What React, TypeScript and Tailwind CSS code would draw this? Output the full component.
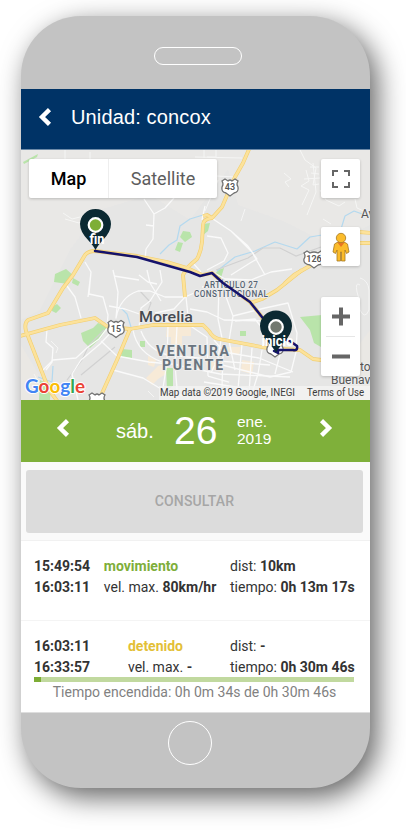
import React from "react";

const arial = "font-['Liberation_Sans',Arial,sans-serif]";
const roboto = "font-['Roboto','Liberation_Sans',sans-serif]";

const highways = [
  "M250 147L243 163L235 177L222 207L212 218Q203 219 203 225L202 242Q201 252 197 259Q191 264 187 268",
  "M212 218L207 215L203 216",
  "M95 251Q88 251 85 255L73 275L63 288L48 313L28 320Q24 323 26 331L40 367L49 390L58 402",
  "M20 336L60 325L95 318L108 327L130 329L153 325L203 325L209 331Q213 338 219 339L267 348L300 350L313 359L330 361",
  "M130 329L117 360L99 400",
  "M95 251L137 256L167 262L187 268L202 275L212 273L223 283L250 302L262 317L268 347",
  "M187 268L183 275L185 297",
  "M302 270L277 290L262 299L250 303",
  "M322 259L294 275L284 284",
  "M359 232L372 233",
  "M359 243L372 243",
];

const streets = [
  "M144 199L154 214L165 208L174 198M154 214L153 239L146 249L145 260M146 225L154 226",
  "M85 262L91 272L88 297M91 272L89 294L103 297L108 315L107 327",
  "M67 286L75 297L81 318",
  "M113 270L118 292L117 307L116 318Q120 297 138 291L150 291L165 297L185 297L201 290",
  "M109 306L125 309L151 318L186 324M160 270L162 282L150 301L141 308L139 328",
  "M147 270L150 283L161 301M157 284L148 282L139 275M139 280L114 276",
  "M185 297L174 309L155 313M186 297L189 325L207 337L208 376",
  "M108 327L99 339L88 347L76 358L53 360L42 371",
  "M116 327L100 344L81 360L72 374L78 400M101 341L117 356L149 362L180 365",
  "M133 330Q137 353 162 362L220 374L290 377M141 331Q148 350 168 355L208 359",
  "M113 370L143 378L161 389L188 397",
  "M168 326L167 362L163 388M177 326L175 365L178 400",
  "M47 329L46 342L53 348L52 362L46 370",
  "M211 271L225 279L251 280L271 272L292 269M228 291L243 293L258 315",
  "M210 217L231 231L252 252L265 275M231 231L248 246L257 259L250 263L231 275",
  "M207 236L221 238L228 253L224 261L207 270M205 206L202 220M193 263L201 272",
  "M202 287L219 286L218 319L222 338M190 309L207 312L224 320L267 321",
  "M225 294L233 316L229 341L235 370M235 321L255 319L269 337M233 316L265 308L288 303L297 333L296 350",
  "M214 340L224 352L259 358L293 372M221 340L218 358L211 373M242 344L238 389M252 348L249 393",
  "M262 350L258 374L250 400M281 350L275 374M297 348L291 372L270 377L214 363",
  "M205 360L270 365M204 382L248 389M223 353L222 387M208 376L229 382",
];

function Shield({ x, y, n }: { x: number; y: number; n: string }) {
  const w = n.length > 2 ? 10 : 8;
  return (
    <g transform={`translate(${x} ${y})`}>
      <path
        d={`M${-w} -6L${-w + 3} -8L${-w + 6} -6Q0 -8 ${w - 6} -6L${w - 3} -8L${w} -6Q${w - 2} -3 ${w} 0Q${w + 1} 5 4 6L0 9L-4 6Q${-w - 1} 5 ${-w} 0Q${-w + 2} -3 ${-w} -6Z`}
        fill="#fff"
        stroke="#727272"
        strokeWidth="1.3"
      />
      {n && <text y="3.2" textAnchor="middle" fontSize="9" fontWeight="600" fill="#555">{n}</text>}
    </g>
  );
}

function Pin({ x, y, r, color, label, width }: { x: number; y: number; r: number; color: string; label: string; width: number }) {
  const s = r / 15.5;
  return (
    <g transform={`translate(${x} ${y})`}>
      <path transform={`scale(${s})`} d="M0 25Q-2 21 -7 15.5Q-15.5 7 -15.5 -1A15.5 15 0 0 1 15.5 -1Q15.5 7 7 15.5Q2 21 0 25Z" fill="#0b2932" />
      <circle r="6.8" fill={color} stroke="#fff" strokeWidth="2.2" />
      <text x={1.5 - width / 2} y="18.5" fontSize="14" fontWeight="700" fill="#fff" textLength={width} lengthAdjust="spacingAndGlyphs">{label}</text>
    </g>
  );
}

function CityMap() {
  return (
    <svg viewBox="21 150 349 250" className={`block h-full w-full ${roboto}`}>
      <rect x="21" y="150" width="349" height="250" fill="#e6e6e5" />
      <path d="M21 150H370V225L330 245L285 222L238 205L228 170L190 220L150 195L100 210L70 250L40 310L21 320Z" fill="#e9e8e6" />
      <path d="M345 400L340 370L370 330V400ZM21 345L42 380L45 400H21Z" fill="#eae8e4" />
      <path d="M167 327h24v9h-9v10h-11v-9h-5zM148 356l8 4-2 7-6-2zM158 366l10-3 1 9-11 7-6 6-6-7zM205 357l17 3-1 12-14-4zM227 347h14l-2 8-14-4zM242 360l12 2-2 12-11-3zM266 326h14v13h-14z" fill="#f7ead7" />
      <g fill="#b9e4aa">
        <path d="M81 333L93 328L98 323L108 327L101 338L90 348L83 341ZM55 274L66 269L74 276L68 284L54 282ZM73 278L80 282L78 286L72 283ZM52 307L57 304L61 308L56 313L52 311ZM183 231L190 232L192 237L185 242L180 237ZM178 242L183 243L180 252L175 250Z" />
        <path d="M300 317L322 315L321 347L314 343L310 330ZM240 331h6v5h-6zM140 341h5v6h-5zM122 349l10 1v8l-11-1zM166 368h7v18l-6 4zM40 380L51 385L50 400H39ZM203 224L210 223L208 231L202 236ZM218 270L224 268L221 278L213 277ZM23 162L38 154L37 157L24 164Z" />
      </g>
      <path d="M160 254L169 245L177 240L180 226L190 219L203 215M217 271L235 257L255 251L275 242L297 249L310 237L322 235M341 229L345 216L354 211L370 217M120 307L127 314L131 327M53 366L52 382L38 377" fill="none" stroke="#b4d9ef" strokeWidth="1.2" strokeLinejoin="round" />
      <path d="M216 270L248 258L263 248L280 248L296 256L321 247M81 375L115 347M140 291L151 303L148 311M104 330L89 345L82 360L67 380" fill="none" stroke="#d1d1d1" strokeWidth="1.2" />
      <g fill="none" stroke="#fafafa" strokeWidth="1.3" strokeLinejoin="round">
        {streets.map((d) => <path key={d} d={d} />)}
      </g>
      <g fill="none" stroke="#fff" strokeWidth="1" opacity=".6" strokeLinejoin="round">
        <path d="M65 150V160M90 152V160M195 157L242 158M204 150V158M217 176L235 177M216 150V157L207 157M218 180L205 211M300 150L305 160L316 168L313 185L319 184M284 173L291 179L285 182L289 187M306 170L309 181L301 186L309 190L302 205M313 163L316 192L307 215M320 190L326 200L339 206L345 202M355 199L357 208L370 214M304 179L320 178M310 167L319 167M311 173L319 174M360 285Q355 281 357 292Q360 299 360 310Q365 320 369 310V290Q368 280 360 278" />
        <path d="M63 213L72 219L80 217M65 219L79 223L85 219M245 209L241 221M323 219L331 224M51 341L58 348L56 353M42 389L34 374M148 391L154 397" />
      </g>
      <g fill="none" strokeLinejoin="round">
        <g stroke="#f2cf70" strokeWidth="3.8">{highways.map((d) => <path key={d} d={d} />)}</g>
        <g stroke="#fce29b" strokeWidth="2.6">{highways.map((d) => <path key={d} d={d} />)}</g>
      </g>
      <Shield x={230} y={187} n="43" />
      <Shield x={116} y={328.5} n="15" />
      <Shield x={314} y={259} n="126" />
      <Shield x={97} y={401} n="" />
      <Shield x={275} y={348} n="" />
      <g fill="#566472" stroke="#ececec" strokeWidth="2" paintOrder="stroke" strokeLinejoin="round">
        <g fontSize="8.2" fontWeight="500">
          <text x="204" y="288" textLength="54">ARTÍCULO 27</text>
          <text x="194" y="297" textLength="74">CONSTITUCIONAL</text>
        </g>
        <g fontSize="14" fontWeight="700" fill="#697580">
          <text x="156" y="356" textLength="73">VENTURA</text>
          <text x="162" y="370" textLength="61">PUENTE</text>
        </g>
        <text x="139" y="322" fontSize="15.5" fontWeight="500" fill="#454a51" textLength="54" lengthAdjust="spacingAndGlyphs">Morelia</text>
        <g fontSize="12" fill="#555">
          <text x="361" y="218">Av</text>
          <text x="360" y="371">to</text>
          <text x="331" y="384">Buenav</text>
        </g>
      </g>
      <path d="M95 251L137 257L190 272L200 276L212 273L223 283L250 302L262 317L277 337L290 341L297 346Q298 351 293 350L278 350V353L274 351" fill="none" stroke="#15126b" strokeWidth="2.5" strokeLinejoin="round" strokeLinecap="round" />
      <Pin x={95.5} y={225} r={15.5} color="#7eae36" label="fin" width={15} />
      <Pin x={276} y={327} r={16} color="#727970" label="inicio" width={32} />
      <rect x="159" y="386" width="211" height="14" fill="#f3f3f3" opacity=".78" />
      <g fontSize="10" fill="#3d3d3d">
        <text x="160" y="396" textLength="135" lengthAdjust="spacingAndGlyphs">Map data ©2019 Google, INEGI</text>
        <text x="307" y="396" textLength="57" lengthAdjust="spacingAndGlyphs">Terms of Use</text>
      </g>
      <text x="25" y="392.5" textLength="60" lengthAdjust="spacingAndGlyphs" className="font-['Lato','Liberation_Sans',sans-serif]" fontSize="19.5" fontWeight="700" stroke="#fff" strokeWidth="2" paintOrder="stroke" strokeLinejoin="round">
        <tspan fill="#4285f4">G</tspan><tspan fill="#ea4335">o</tspan><tspan fill="#fbbc05">o</tspan><tspan fill="#4285f4">g</tspan><tspan fill="#34a853">l</tspan><tspan fill="#ea4335">e</tspan>
      </text>
    </svg>
  );
}

function Chevron({ right = false }: { right?: boolean }) {
  return (
    <svg width="14" height="20" viewBox="0 0 14 20" className="shrink-0" fill="none" stroke="#fff" strokeWidth="4.4">
      <path d={right ? "M2.5 2.6L10 10L2.5 17.4" : "M11.5 2.6L4 10L11.5 17.4"} />
    </svg>
  );
}

const trips = [
  { start: "15:49:54", end: "16:03:11", state: "movimiento", tint: "text-[#7eae3a]", speed: "80km/hr", dist: "10km", time: "0h 13m 17s" },
  { start: "16:03:11", end: "16:33:57", state: "detenido", tint: "text-[#e3bf38]", speed: "-", dist: "-", time: "0h 30m 46s" },
];

function Trip({ trip }: { trip: (typeof trips)[number] }) {
  return (
    <div className="flex justify-between whitespace-nowrap text-[14px] leading-[20.5px] text-[#333]">
      <div className="font-bold"><p>{trip.start}</p><p>{trip.end}</p></div>
      <div><p className={`font-bold ${trip.tint}`}>{trip.state}</p><p>vel. max. <b>{trip.speed}</b></p></div>
      <div className="w-[124px]"><p>dist: <b>{trip.dist}</b></p><p>tiempo: <b>{trip.time}</b></p></div>
    </div>
  );
}

export default function App() {
  return (
    <div className="h-[832px] w-[406px] overflow-hidden bg-white pl-[21px] pt-4">
      <div className="flex h-[772px] w-[349px] flex-col overflow-hidden rounded-[60px] bg-[#c3c3c3] shadow-[7px_9px_28px_rgba(0,0,0,0.62)]">
        <div className="flex h-[73px] shrink-0 justify-center pt-[30.5px] pl-[4px]">
          <div className="h-[18px] w-[88px] rounded-full border-[1.5px] border-white" />
        </div>
        <header className={`flex h-[61px] shrink-0 items-center border-b border-[#6c8aa8] bg-[#003366] pb-[4px] pl-[17px] text-white ${arial}`}>
          <Chevron />
          <h1 className="ml-[19px] text-[20px] leading-6 tracking-[0.14px]">Unidad: concox</h1>
        </header>
        <section className="relative h-[250px] shrink-0 overflow-hidden">
          <CityMap />
          <div className={`absolute left-[8px] top-[9px] flex h-[39px] w-[188px] items-center rounded-[2px] bg-white text-[18px] shadow-[0_1px_3px_rgba(0,0,0,0.2)] ${roboto}`}>
            <span className="flex h-full w-[80px] items-center justify-center border-r border-[#eee] font-medium text-black">Map</span>
            <span className="flex-1 text-center text-[#5d5d5d]">Satellite</span>
          </div>
          <div className="absolute right-[10px] top-[9px] flex size-[39px] items-center justify-center rounded-[2px] bg-white shadow-[0_1px_3px_rgba(0,0,0,0.2)]">
            <svg width="18" height="18" fill="none" stroke="#666" strokeWidth="2"><path d="M1 6V1H6M12 1H17V6M17 12V17H12M6 17H1V12" /></svg>
          </div>
          <div className="absolute right-[10px] top-[77px] flex size-[39px] items-center justify-center rounded-[2px] bg-white shadow-[0_1px_3px_rgba(0,0,0,0.2)]">
            <svg width="18" height="30" viewBox="0 0 18 30" fill="#fbbc2b" stroke="#a67822" strokeWidth=".8">
              <path d="M5 10.5L2.5 12L1 20L3.5 21.5L5 18V29H8.5V20H9.5V29H13V18L14.5 21.5L17 20L15.5 12L13 10.5Z" />
              <circle cx="9" cy="6" r="4.7" /><path d="M5 10L9 15L13 10Q9 12 5 10" fill="#e87722" stroke="none" />
            </svg>
          </div>
          <div className="absolute right-[10px] top-[147px] flex h-[79px] w-[39px] flex-col items-center rounded-[2px] bg-white shadow-[0_1px_3px_rgba(0,0,0,0.2)]">
            <svg width="39" height="79" fill="none" stroke="#666" strokeWidth="4"><path d="M11 19.5H29M20 10.5V28.5M11 59.5H29" /><path d="M5 39.5H34" stroke="#e6e6e6" strokeWidth="1" /></svg>
          </div>
        </section>
        <section className={`flex h-[62px] shrink-0 items-center bg-[#7fb03a] pl-[35px] text-white ${arial}`}>
          <div className="pb-[7px]"><Chevron /></div>
          <span className="ml-[46px] w-[58px] pb-[1px] text-[20px] leading-6">sáb.</span>
          <span className="w-[63px] text-[39px] leading-[44px]">26</span>
          <span className="w-[82px] pb-[2px] text-[15.5px] leading-[17.5px]">ene.<br />2019</span>
          <div className="pb-[7px]"><Chevron right /></div>
        </section>
        <main className={`flex h-[251px] shrink-0 flex-col border-b border-[#dedede] bg-white ${roboto}`}>
          <div className="h-[79px] shrink-0 border-b border-[#f1f1f1] bg-[#fafafa] pl-[5px] pt-[8px]">
            <button className="h-[63px] w-[337px] rounded-[3px] bg-[#dcdcdc] text-[14px] font-medium tracking-[0.15px] text-[#a6a6a6]">CONSULTAR</button>
          </div>
          <div className="h-[80px] shrink-0 border-b border-[#f4f4f4] pl-[13px] pr-[16px] pt-[15px]"><Trip trip={trips[0]} /></div>
          <div className="pl-[13px] pr-[16px] pt-[15px]">
            <Trip trip={trips[1]} />
            <div className="h-[5px] bg-[#c1d99f]"><div className="h-full w-[7px] bg-[#7dad35]" /></div>
            <p className="whitespace-nowrap pl-[1px] text-center text-[14px] leading-[20px] text-[#818181]">Tiempo encendida: 0h 0m 34s de 0h 30m 46s</p>
          </div>
        </main>
        <div className="flex justify-center pr-[12px] pt-[8px]">
          <div className="size-[44px] rounded-full border-[1.5px] border-white" />
        </div>
      </div>
    </div>
  );
}
